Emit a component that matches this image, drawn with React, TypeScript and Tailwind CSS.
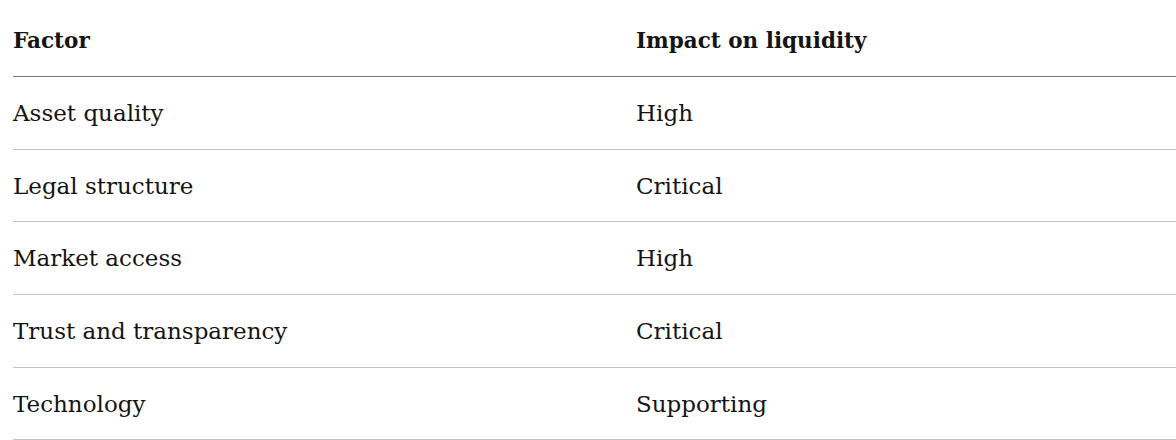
import React from "react";

const rows: [string, string][] = [
  ["Asset quality", "High"],
  ["Legal structure", "Critical"],
  ["Market access", "High"],
  ["Trust and transparency", "Critical"],
  ["Technology", "Supporting"],
];

export default function App() {
  return (
    <div
      className="w-[1176px] h-[440px] overflow-hidden bg-white pl-[13px] text-[#141414]"
      style={{ fontFamily: '"DejaVu Serif", "Liberation Serif", serif' }}
    >
      <table className="w-[1200px] border-collapse table-fixed leading-[32px]">
        <colgroup>
          <col className="w-[623px]" />
          <col />
        </colgroup>
        <thead>
          <tr className="border-b border-[#7a7a7a]">
            <th className="text-left font-bold text-[21.5px] pt-[25px] pb-[19px] px-0">Factor</th>
            <th className="text-left font-bold text-[21.5px] pt-[25px] pb-[19px] px-0">Impact on liquidity</th>
          </tr>
        </thead>
        <tbody>
          {rows.map(([f, i]) => (
            <tr key={f} className="border-b border-[#c4c4c4]">
              <td className="pt-[20px] pb-[19.67px] px-0 font-normal text-[23px]">{f}</td>
              <td className="pt-[20px] pb-[19.67px] px-0 font-normal text-[23px]">{i}</td>
            </tr>
          ))}
        </tbody>
      </table>
    </div>
  );
}
